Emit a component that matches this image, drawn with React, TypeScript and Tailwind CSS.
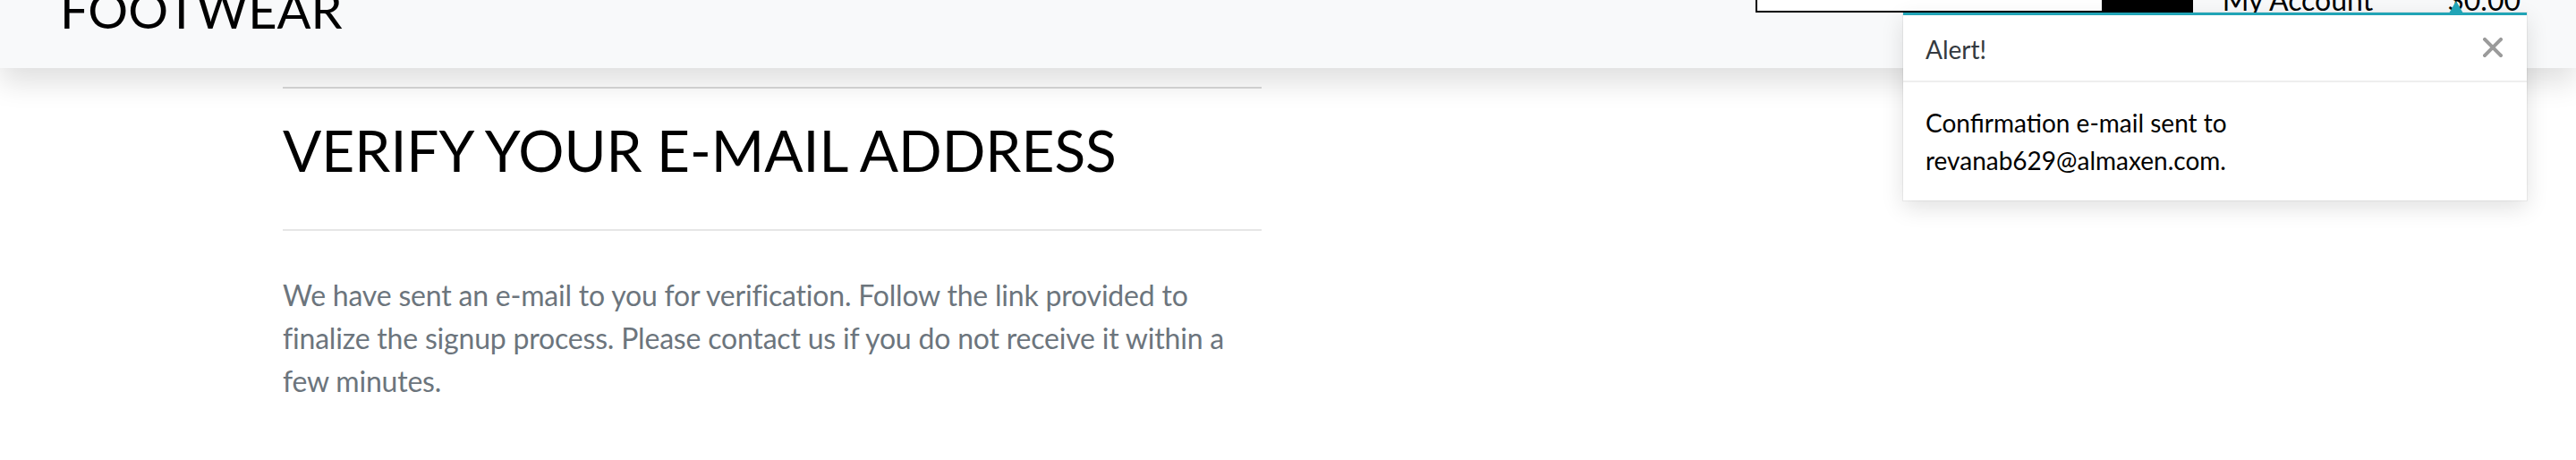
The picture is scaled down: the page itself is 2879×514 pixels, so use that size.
import React from "react";

export default function App() {
  return (
    <div className="min-h-[514px] w-[2879px] bg-white font-['Lato','Open_Sans',sans-serif] text-black overflow-hidden relative">
      {/* HEADER */}
      <header className="relative z-10 h-[76px] bg-[#f8f9fa] shadow-[0_16px_32px_rgba(0,0,0,0.13)] flex items-start justify-between pl-[67px] pr-[62px]">
        <div className="mt-[-17px] text-[56px] leading-[56px]">FOOTWEAR</div>

        <div className="flex items-start">
          <div className="flex items-start mt-[-46px]">
            <input
              className="w-[389px] h-[60px] border-2 border-black bg-white outline-none"
              aria-label="search"
            />
            <button className="w-[100px] h-[60px] bg-black" aria-label="search button" />
          </div>
          <a className="ml-[33px] mt-[-19px] text-[32px] leading-[38px] text-black">My Account</a>
          <span className="ml-[83px] mt-[-19px] text-[32px] leading-[38px] text-black">$0.00</span>
        </div>

        {/* TOAST */}
        <div className="absolute left-[2127px] top-[14px] w-[697px] bg-white border-t-[3px] border-[#21a4b6] shadow-[0_8px_24px_rgba(0,0,0,0.12)] ring-1 ring-black/5">
          <div className="absolute left-[610px] top-[-16px] w-0 h-0 border-l-[8px] border-r-[8px] border-b-[14px] border-l-transparent border-r-transparent border-b-[#21a4b6]" />
          <div className="flex items-start justify-between pl-[25px] pr-[27px] pt-[17px] pb-[14px] border-b-2 border-[#eeeeee]">
            <span className="text-[28px] leading-[42px] text-[#343a40]">Alert!</span>
            <svg width="22" height="22" viewBox="0 0 22 22" className="mt-[8px]">
              <path d="M2 2 L20 20 M20 2 L2 20" stroke="#9b9b9b" strokeWidth="4" strokeLinecap="square" />
            </svg>
          </div>
          <div className="px-[25px] py-[24px] text-[28px] leading-[42px] text-black">
            Confirmation e-mail sent to
            <br />
            revanab629@almaxen.com.
          </div>
        </div>
      </header>

      {/* CONTENT */}
      <main className="ml-[316px] w-[1094px] pt-[21px]">
        <div className="border-t-2 border-b-2 border-t-[#d9d9d9] border-b-[#e6e6e6] pt-[30px] pb-[50px]">
          <h1 className="text-[64px] leading-[77px] font-normal text-black">VERIFY YOUR E-MAIL ADDRESS</h1>
        </div>
        <p className="mt-[48px] text-[32px] leading-[48px] tracking-[-0.2px] text-[#6c757d]">
          We have sent an e-mail to you for verification. Follow the link provided to finalize the signup process.
          Please contact us if you do not receive it within a few minutes.
        </p>
      </main>
    </div>
  );
}
